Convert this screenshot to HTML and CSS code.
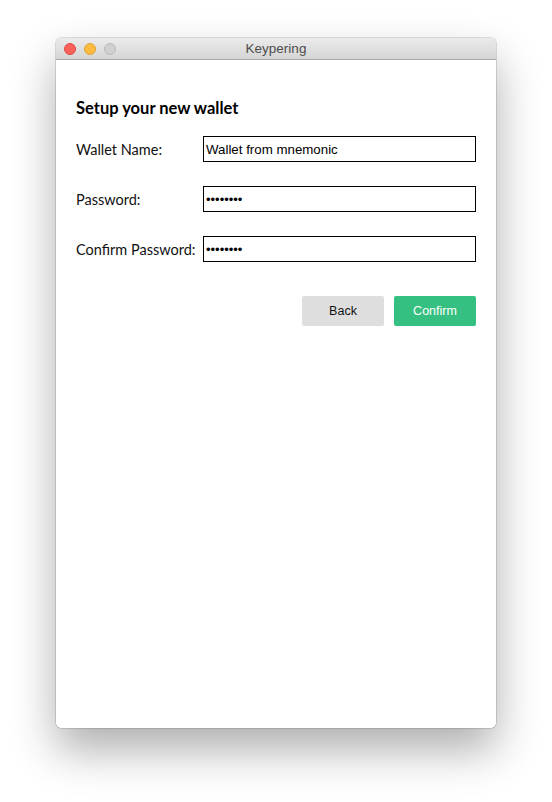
FILE: index.html
```html
<!DOCTYPE html>
<html>
<head>
<meta charset="utf-8">
<link rel="stylesheet" href="styles.css">
</head>
<body>
<div class="window">
  <div class="titlebar">
    <div class="lights">
      <span class="light red"></span>
      <span class="light yellow"></span>
      <span class="light gray"></span>
    </div>
    <div class="title">Keypering</div>
  </div>
  <div class="content">
    <h1 class="heading">Setup your new wallet</h1>
    <div class="form">
      <div class="row">
        <label class="label">Wallet Name:</label>
        <div class="input">Wallet from mnemonic</div>
      </div>
      <div class="row">
        <label class="label">Password:</label>
        <div class="input dots">••••••••</div>
      </div>
      <div class="row">
        <label class="label">Confirm Password:</label>
        <div class="input dots">••••••••</div>
      </div>
    </div>
    <div class="actions">
      <button class="btn back">Back</button>
      <button class="btn confirm">Confirm</button>
    </div>
  </div>
</div>
</body>
</html>
```
FILE: styles.css
```css
html, body {
  margin: 0;
  padding: 0;
  background: #ffffff;
}
body {
  padding: 38px 0 0 56px;
  width: 552px;
  height: 802px;
  box-sizing: border-box;
  overflow: hidden;
}
.window {
  width: 440px;
  height: 690px;
  border-radius: 5px;
  background: #fff;
  overflow: hidden;
  box-shadow: 0 0 0 0.5px rgba(0,0,0,0.25), 0 22px 45px rgba(0,0,0,0.32);
}
.titlebar {
  height: 21px;
  background: linear-gradient(#ebebeb, #d5d5d5);
  border-bottom: 1px solid #a9a9a9;
  display: flex;
  align-items: center;
  position: relative;
}
.lights {
  display: flex;
  gap: 8px;
  padding-left: 8px;
}
.light {
  width: 12px;
  height: 12px;
  border-radius: 50%;
  box-sizing: border-box;
}
.red { background: #fc605b; border: 0.5px solid #de4a43; }
.yellow { background: #fdbc40; border: 0.5px solid #dea236; }
.gray { background: #d0d0d0; border: 0.5px solid #b9b9b9; }
.title {
  position: absolute;
  left: 0;
  right: 0;
  top: 0;
  line-height: 21px;
  text-align: center;
  font-family: "Liberation Sans", Arial, sans-serif;
  font-size: 13.5px;
  color: #4d4d4d;
  pointer-events: none;
}
.content {
  padding: 38px 20px 0 20px;
}
.heading {
  margin: 0;
  font-family: Lato, sans-serif;
  font-weight: 700;
  font-size: 16.5px;
  line-height: 20px;
  color: #000;
}
.form {
  margin-top: 18px;
  display: flex;
  flex-direction: column;
  gap: 24px;
}
.row {
  display: flex;
  align-items: center;
}
.label {
  width: 127px;
  font-family: Lato, sans-serif;
  font-size: 14.5px;
  color: #111;
}
.input {
  width: 273px;
  height: 26px;
  box-sizing: border-box;
  border: 1px solid #000;
  padding: 1px 2px 0;
  font-family: "Liberation Sans", Arial, sans-serif;
  font-size: 13.3px;
  line-height: 24px;
  color: #000;
}
.dots {
  font-size: 13px;
}
.actions {
  margin-top: 34px;
  display: flex;
  justify-content: flex-end;
  gap: 10px;
}
.btn {
  width: 82px;
  height: 30px;
  border: none;
  border-radius: 2px;
  font-family: "Liberation Sans", Arial, sans-serif;
  font-size: 12.5px;
  padding: 0;
}
.back {
  background: #dedede;
  color: #111;
}
.confirm {
  background: #35bf80;
  color: #fff;
}
```
